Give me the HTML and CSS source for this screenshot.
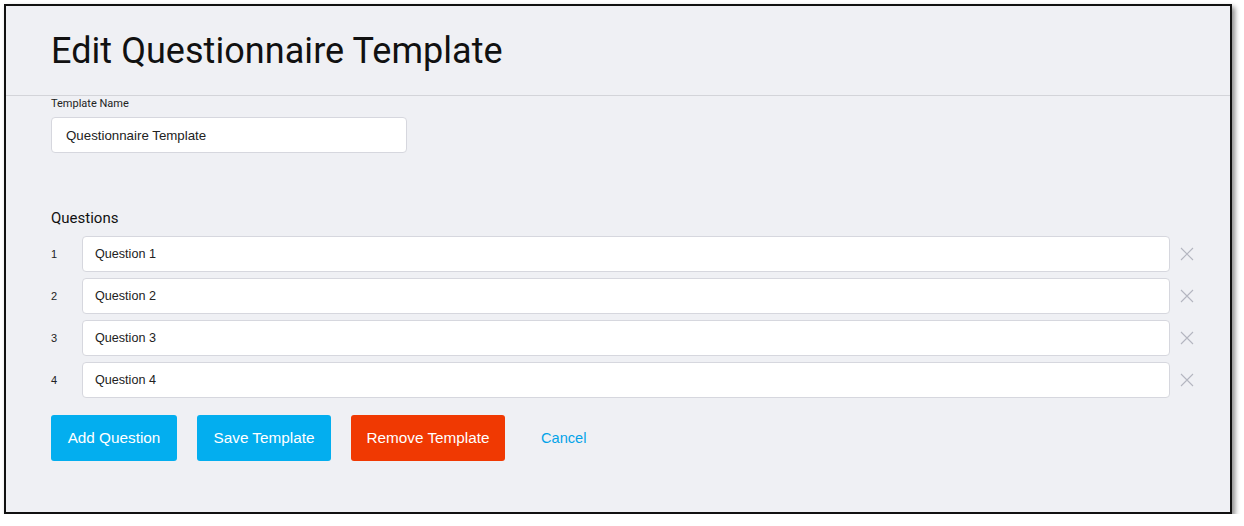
FILE: index.html
```html
<!DOCTYPE html>
<html>
<head>
<meta charset="utf-8">
<link rel="stylesheet" href="styles.css">
</head>
<body>
<div class="frame">
  <header class="header">
    <h1 class="title">Edit Questionnaire Template</h1>
  </header>
  <main class="content">
    <label class="field-label">Template Name</label>
    <div class="input name-input">Questionnaire Template</div>

    <div class="section-label">Questions</div>
    <div class="questions">
      <div class="q-row"><span class="q-num">1</span><div class="input q-input">Question 1</div><span class="q-remove"><svg width="14" height="14" viewBox="0 0 14 14"><path d="M1 1L13 13M13 1L1 13" stroke="#b4b6c0" stroke-width="1.1"/></svg></span></div>
      <div class="q-row"><span class="q-num">2</span><div class="input q-input">Question 2</div><span class="q-remove"><svg width="14" height="14" viewBox="0 0 14 14"><path d="M1 1L13 13M13 1L1 13" stroke="#b4b6c0" stroke-width="1.1"/></svg></span></div>
      <div class="q-row"><span class="q-num">3</span><div class="input q-input">Question 3</div><span class="q-remove"><svg width="14" height="14" viewBox="0 0 14 14"><path d="M1 1L13 13M13 1L1 13" stroke="#b4b6c0" stroke-width="1.1"/></svg></span></div>
      <div class="q-row"><span class="q-num">4</span><div class="input q-input">Question 4</div><span class="q-remove"><svg width="14" height="14" viewBox="0 0 14 14"><path d="M1 1L13 13M13 1L1 13" stroke="#b4b6c0" stroke-width="1.1"/></svg></span></div>
    </div>

    <div class="actions">
      <button class="btn btn-blue btn-add">Add Question</button>
      <button class="btn btn-blue btn-save">Save Template</button>
      <button class="btn btn-red btn-remove">Remove Template</button>
      <a class="cancel">Cancel</a>
    </div>
  </main>
</div>
</body>
</html>
```
FILE: styles.css
```css
* { box-sizing: border-box; }
html, body { margin: 0; padding: 0; background: #ffffff; }
body { padding: 4px 0 0 4px; }

.frame {
  width: 1228px;
  height: 510px;
  border: 2px solid #111;
  background: #eff0f4;
  box-shadow: 3px 3px 5px rgba(0,0,0,0.45);
  font-family: Roboto, "Liberation Sans", sans-serif;
}

.header {
  height: 90px;
  border-bottom: 1px solid #d3d4d9;
  padding: 0 0 0 45px;
  display: flex;
  align-items: center;
}
.title {
  margin: 0;
  font-weight: 400;
  font-size: 36px;
  color: #111;
  letter-spacing: 0.05px;
}

.content {
  padding: 0 0 0 45px;
  display: flex;
  flex-direction: column;
}

.field-label {
  font-size: 11px;
  line-height: 14px;
  color: #222;
  margin-top: 1px;
}

.input {
  background: #fff;
  border: 1px solid #d6d7de;
  border-radius: 4px;
  height: 36px;
  display: flex;
  align-items: center;
  font-family: "Liberation Sans", Arial, sans-serif;
  color: #222;
}

.name-input {
  width: 356px;
  margin-top: 6px;
  padding-left: 14px;
  font-size: 13.3px;
}

.section-label {
  margin-top: 55px;
  font-size: 15px;
  line-height: 20px;
  color: #111;
}

.questions {
  margin-top: 8px;
  display: flex;
  flex-direction: column;
  gap: 6px;
}
.q-row {
  display: flex;
  align-items: center;
}
.q-num {
  width: 31px;
  font-size: 11px;
  font-family: "Liberation Sans", Arial, sans-serif;
  color: #222;
}
.q-input {
  width: 1088px;
  padding-left: 12px;
  font-size: 12.6px;
}
.q-remove {
  margin-left: 10px;
  display: flex;
}

.actions {
  margin-top: 17px;
  display: flex;
  align-items: center;
  gap: 20px;
}
.btn {
  height: 46px;
  border: none;
  border-radius: 3px;
  color: #fff;
  font-family: "Liberation Sans", Arial, sans-serif;
  font-size: 15.3px;
  padding: 0;
}
.btn-blue { background: #03aeef; }
.btn-red { background: #f03902; }
.btn-add { width: 126px; }
.btn-save { width: 134px; }
.btn-remove { width: 154px; }
.cancel {
  margin-left: 16px;
  color: #03a3e8;
  font-family: "Liberation Sans", Arial, sans-serif;
  font-size: 14.6px;
}
```
